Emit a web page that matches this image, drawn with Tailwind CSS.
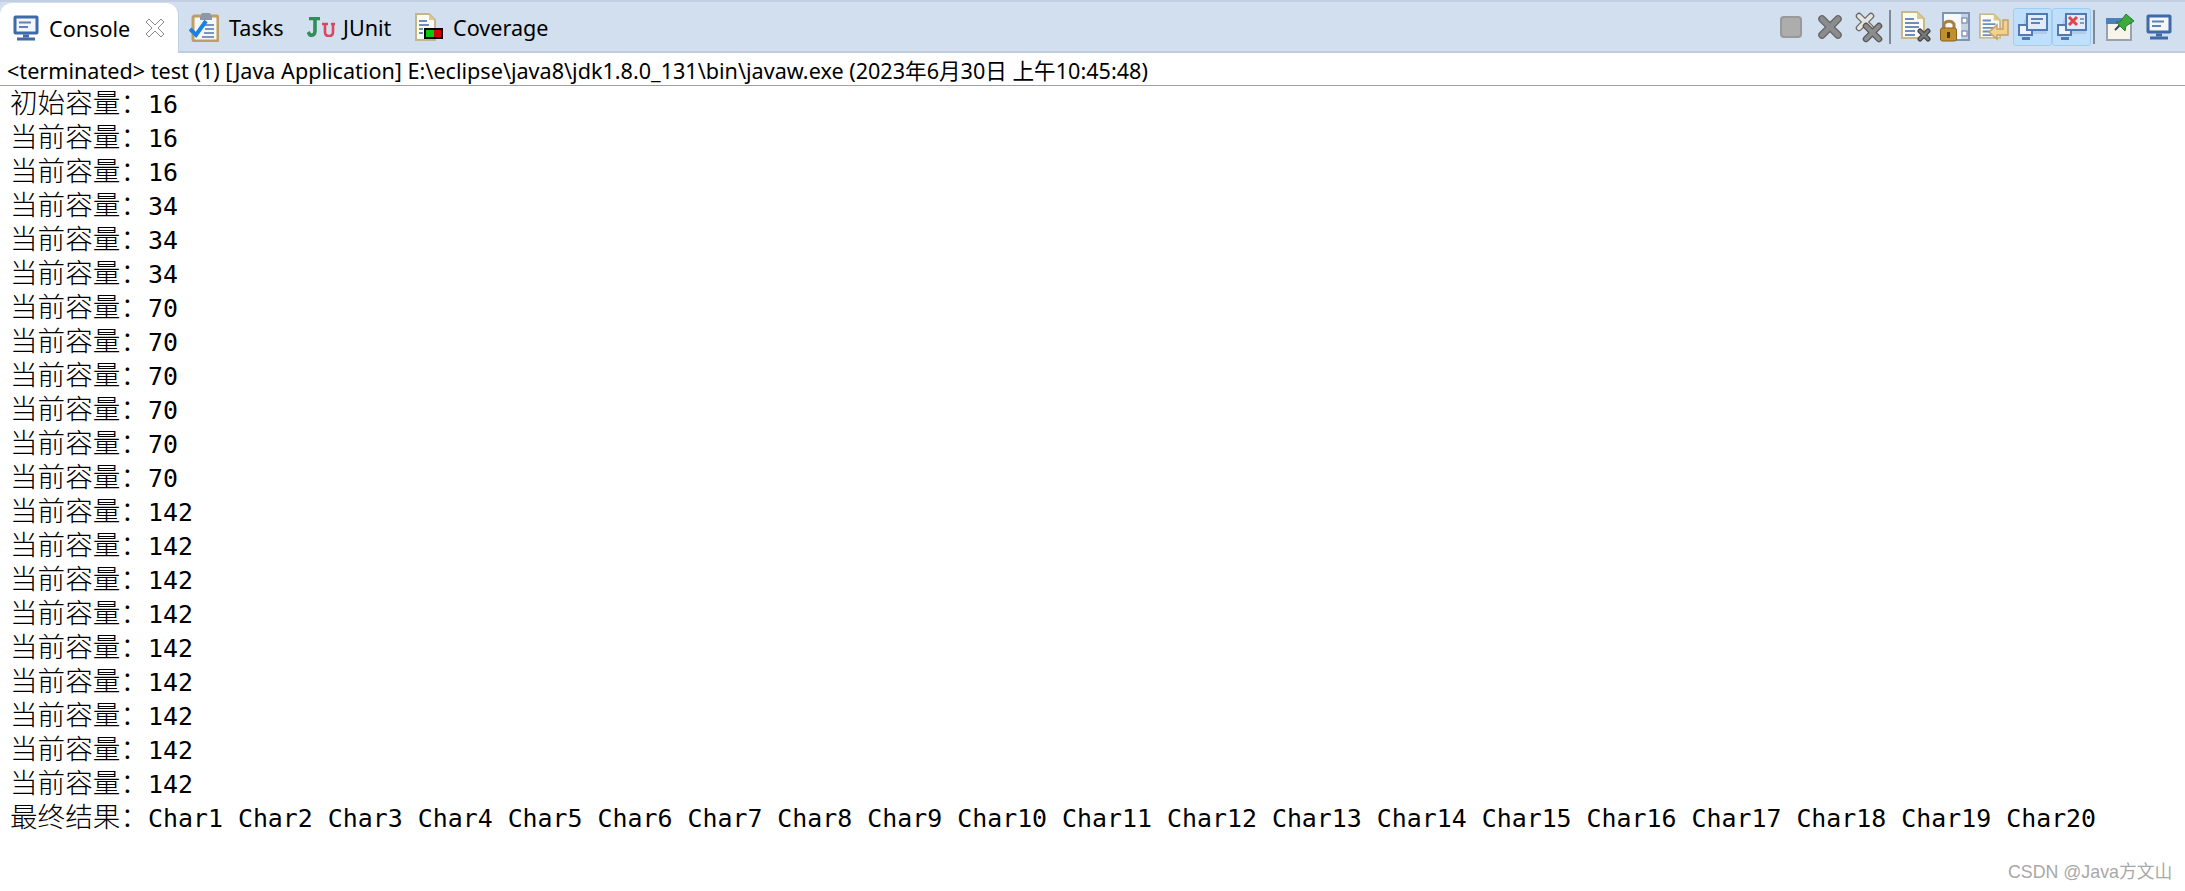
<!DOCTYPE html>
<html lang="en">
<head>
    <meta charset="UTF-8">
    <title>Console</title>
    <script src="https://cdn.jsdelivr.net/npm/@tailwindcss/browser@4"></script>
</head>
<body class="bg-white w-[2185px] h-[891px] overflow-hidden relative font-['Noto_Sans','Noto_Sans_CJK_SC',sans-serif] text-black">
    <!-- Svg defs -->
    <svg width="0" height="0" class="absolute">
        <defs>
            <symbol id="monitor" viewBox="0 0 26 26">
                <rect x="0.5" y="0.5" width="25" height="19" rx="2" fill="#3f6aa8"/>
                <rect x="3.5" y="3.5" width="19" height="13" fill="#f3f6fa"/>
                <rect x="6" y="6.5" width="12" height="2" fill="#5f82b5"/>
                <rect x="6" y="11" width="9" height="2" fill="#5f82b5"/>
                <rect x="10" y="19.5" width="6" height="3" fill="#3f6aa8"/>
                <rect x="4" y="22.5" width="18" height="3" fill="#3f6aa8"/>
            </symbol>
            <symbol id="grayx" viewBox="0 0 26 26">
                <path d="M5 5 L21 21 M21 5 L5 21" stroke="#666" stroke-width="7.5" stroke-linecap="round"/>
                <path d="M5 5 L21 21 M21 5 L5 21" stroke="#8c8c8c" stroke-width="5" stroke-linecap="round"/>
            </symbol>
            <symbol id="doc" viewBox="0 0 24 28">
                <path d="M1 1 H16 L23 8 V27 H1 Z" fill="#fbfaf3" stroke="#c9b888" stroke-width="2"/>
                <path d="M16 1 V8 H23 Z" fill="#dcc78f"/>
                <path d="M4 8 H13 M4 12 H18 M4 16 H18 M4 20 H14 M4 24 H14" stroke="#6d8dbd" stroke-width="2"/>
            </symbol>
        </defs>
    </svg>

    <!-- View tabs and toolbar -->
    <header class="h-[53px] bg-[#d1dfee] border-t-[2px] border-t-[#c2cfe0] border-b-[2px] border-b-[#bccde2] flex items-end">
        <div class="w-[179px] h-[50px] -mb-[2px] bg-white rounded-t-[12px] flex items-center pl-[13px] shrink-0 border-r border-r-[#c0d0e4]">
            <svg class="w-[26px] h-[26px] shrink-0" viewBox="0 0 26 26"><use href="#monitor"/></svg>
            <span class="ml-[10px] mt-[2px] text-[21.6px] leading-none w-[96px] shrink-0">Console</span>
            <svg class="w-[20px] h-[20px] shrink-0" viewBox="0 0 20 20" fill="#fff" stroke="#8a8a8a" stroke-width="1">
                <path d="M1 4 L4 1 L10 7 L16 1 L19 4 L13 10 L19 16 L16 19 L10 13 L4 19 L1 16 L7 10 Z"/>
            </svg>
        </div>
        <nav class="flex items-center h-[49px] pl-[10px] text-[21.6px] leading-none shrink-0">
            <svg class="w-[30px] h-[30px] shrink-0" viewBox="0 0 30 30">
                <rect x="4" y="4" width="25" height="25" rx="2" fill="#f6f6f2" stroke="#bd9e68" stroke-width="3"/>
                <path d="M11 5 L13 1 H21 L23 5 V8 H11 Z" fill="#8d97a8"/>
                <path d="M16 13 H25 M16 17 H25 M15 21 H25 M13 25 H25" stroke="#7c95bd" stroke-width="2"/>
                <path d="M1 17 L7 23 L17 9" fill="none" stroke="#1681e6" stroke-width="4"/>
            </svg>
            <span class="ml-[10px] mt-[2px] w-[78px] shrink-0">Tasks</span>
            <span class="w-[28px] h-[20px] flex shrink-0">
                <svg class="w-[28px] h-[20px]" viewBox="0 0 28 20">
                    <path d="M2 1.5 H13 M8 1 V14 Q8 19 3 18 L1 15" fill="none" stroke="#2f8f57" stroke-width="3.6"/>
                    <path d="M15 7 H21 M24 7 H28 M18 7 V15 Q18 19 22 19 Q26 19 26 15 V7" fill="none" stroke="#d9475f" stroke-width="2.6"/>
                </svg>
            </span>
            <span class="ml-[8px] mt-[2px] w-[72px] shrink-0">JUnit</span>
            <svg class="w-[28px] h-[28px] shrink-0" viewBox="0 0 28 28">
                <path d="M1 1 H14 L20 7 V27 H1 Z" fill="#fbfaf3" stroke="#c4b68c" stroke-width="2"/>
                <path d="M14 1 V7 H20 Z" fill="#dcc78f"/>
                <path d="M4 8 H12 M4 12 H14 M4 16 H8 M4 20 H8" stroke="#6d8dbd" stroke-width="2"/>
                <rect x="9" y="15" width="19" height="11" fill="#000"/>
                <rect x="11" y="17" width="8" height="7" fill="#0cc70c"/>
                <rect x="19" y="17" width="7" height="7" fill="#d40000"/>
            </svg>
            <span class="ml-[10px] mt-[2px]">Coverage</span>
        </nav>

        <div class="ml-auto h-[49px] flex items-center pr-[13px] shrink-0">
            <svg class="w-[22px] h-[22px] shrink-0" viewBox="0 0 22 22">
                <rect x="1" y="1" width="20" height="20" rx="3" fill="#adadad" stroke="#999" stroke-width="2"/>
            </svg>
            <svg class="ml-[15px] w-[26px] h-[26px] shrink-0" viewBox="0 0 26 26"><use href="#grayx"/></svg>
            <svg class="ml-[11px] w-[30px] h-[32px] shrink-0" viewBox="0 0 30 32">
                <path d="M5 5 L17 17 M17 5 L5 17" stroke="#666" stroke-width="6.5" stroke-linecap="round"/>
                <path d="M5 5 L17 17 M17 5 L5 17" stroke="#e4e4e0" stroke-width="4" stroke-linecap="round"/>
                <path d="M12 15 L25 28 M25 15 L12 28" stroke="#555" stroke-width="6.5" stroke-linecap="round"/>
                <path d="M12 15 L25 28 M25 15 L12 28" stroke="#8c8c8c" stroke-width="4" stroke-linecap="round"/>
            </svg>
            <span class="ml-[5px] w-[2px] h-[34px] bg-[#7f8a98] shrink-0"></span>
            <svg class="ml-[10px] w-[30px] h-[32px] shrink-0" viewBox="0 0 30 32">
                <svg x="0" y="0" width="24" height="28" viewBox="0 0 24 28"><use href="#doc"/></svg>
                <path d="M19 20 L27 28 M27 20 L19 28" stroke="#444" stroke-width="5" stroke-linecap="round"/>
                <path d="M19 20 L27 28 M27 20 L19 28" stroke="#777" stroke-width="2.5" stroke-linecap="round"/>
            </svg>
            <svg class="ml-[9px] w-[30px] h-[30px] shrink-0" viewBox="0 0 30 30">
                <rect x="3" y="1" width="26" height="27" fill="#f5f8fc" stroke="#7f93b5" stroke-width="2"/>
                <rect x="21" y="2" width="7" height="25" fill="#c6d3e4"/>
                <rect x="22" y="6" width="5" height="5" fill="#fff" stroke="#5f7ba5"/>
                <rect x="22" y="19" width="5" height="5" fill="#fff" stroke="#5f7ba5"/>
                <path d="M4 17 V12 A6 6 0 0 1 14 12 V17" fill="none" stroke="#a8813e" stroke-width="3"/>
                <rect x="0.5" y="16" width="16" height="13" rx="2" fill="#c08f2e" stroke="#8c5f1c"/>
                <rect x="7" y="20" width="3" height="6" fill="#4d3410"/>
            </svg>
            <svg class="ml-[9px] w-[30px] h-[30px] shrink-0" viewBox="0 0 30 30">
                <svg x="0" y="0" width="22" height="28" viewBox="0 0 24 28"><use href="#doc"/></svg>
                <path d="M24 8 V17 H18 V13 L10 20 L18 27 V23 H29 V8 Z" fill="#f5cf8f" stroke="#c4a260" stroke-width="1.5"/>
            </svg>
            <div class="ml-[4px] w-[39px] h-[38px] bg-[#bfdffa] border border-[#9fcdf6] rounded-[3px] flex items-center justify-center shrink-0">
                <svg class="w-[30px] h-[30px]" viewBox="0 0 30 30">
                    <path d="M8 3 H29 V22 H8 L2 26 Z" fill="#9db5d4" opacity="0.45"/>
                    <rect x="1" y="13" width="13" height="10" fill="#eef3f9" stroke="#4f7ab4" stroke-width="2"/>
                    <rect x="4" y="25" width="8" height="3" fill="#4f7ab4"/>
                    <rect x="9" y="2" width="20" height="16" fill="#e3ecf6" stroke="#4f7ab4" stroke-width="2"/>
                    <path d="M13 7 H25 M13 11 H22" stroke="#5f82b5" stroke-width="2"/>
                </svg>
            </div>
            <div class="w-[39px] h-[38px] bg-[#bfdffa] border border-[#9fcdf6] rounded-[3px] flex items-center justify-center shrink-0">
                <svg class="w-[30px] h-[30px]" viewBox="0 0 30 30">
                    <path d="M8 3 H29 V22 H8 L2 26 Z" fill="#9db5d4" opacity="0.45"/>
                    <rect x="1" y="13" width="13" height="10" fill="#eef3f9" stroke="#4f7ab4" stroke-width="2"/>
                    <rect x="4" y="25" width="8" height="3" fill="#4f7ab4"/>
                    <rect x="9" y="2" width="20" height="16" fill="#e3ecf6" stroke="#4f7ab4" stroke-width="2"/>
                    <path d="M23 7 H27 M23 11 H27" stroke="#5f82b5" stroke-width="1.6"/>
                    <path d="M12 5 L20 13 M20 5 L12 13" stroke="#e2434b" stroke-width="3"/>
                </svg>
            </div>
            <span class="ml-[2px] w-[2px] h-[34px] bg-[#7f8a98] shrink-0"></span>
            <svg class="ml-[11px] w-[28px] h-[28px] shrink-0" viewBox="0 0 28 28">
                <rect x="1" y="6" width="24" height="21" fill="#f7f5ea" stroke="#9aa3ad" stroke-width="2"/>
                <rect x="0" y="5" width="26" height="6" fill="#4d80bd"/>
                <path d="M9 17 L15 11" stroke="#33475e" stroke-width="2"/>
                <path d="M14 9 L20 1 L28 8 L20 13 L19 18 L10 9 Z" fill="#3caa3c" stroke="#23802a"/>
            </svg>
            <svg class="ml-[12px] w-[26px] h-[26px] shrink-0" viewBox="0 0 26 26"><use href="#monitor"/></svg>
        </div>
    </header>

    <!-- Process label -->
    <div class="h-[33px] border-b-[1px] border-b-[#a0a0a0] pl-[7px] pt-[4px] flex items-center text-[21.6px] leading-none whitespace-pre">&lt;terminated&gt; test (1) [Java Application] E:\eclipse\java8\jdk1.8.0_131\bin\javaw.exe (2023年6月30日 上午10:45:48)</div>

    <!-- Console output -->
    <main class="pl-[10px] -mt-[2px] flex flex-col font-['DejaVu_Sans_Mono','Noto_Sans_CJK_SC',monospace] text-[24.9px] whitespace-pre">
        <div class="h-[34px] leading-[34px]"><span class="font-['Noto_Sans_CJK_SC',sans-serif] font-light text-[27.6px]">初始容量：</span>16</div>
        <div class="h-[34px] leading-[34px]"><span class="font-['Noto_Sans_CJK_SC',sans-serif] font-light text-[27.6px]">当前容量：</span>16</div>
        <div class="h-[34px] leading-[34px]"><span class="font-['Noto_Sans_CJK_SC',sans-serif] font-light text-[27.6px]">当前容量：</span>16</div>
        <div class="h-[34px] leading-[34px]"><span class="font-['Noto_Sans_CJK_SC',sans-serif] font-light text-[27.6px]">当前容量：</span>34</div>
        <div class="h-[34px] leading-[34px]"><span class="font-['Noto_Sans_CJK_SC',sans-serif] font-light text-[27.6px]">当前容量：</span>34</div>
        <div class="h-[34px] leading-[34px]"><span class="font-['Noto_Sans_CJK_SC',sans-serif] font-light text-[27.6px]">当前容量：</span>34</div>
        <div class="h-[34px] leading-[34px]"><span class="font-['Noto_Sans_CJK_SC',sans-serif] font-light text-[27.6px]">当前容量：</span>70</div>
        <div class="h-[34px] leading-[34px]"><span class="font-['Noto_Sans_CJK_SC',sans-serif] font-light text-[27.6px]">当前容量：</span>70</div>
        <div class="h-[34px] leading-[34px]"><span class="font-['Noto_Sans_CJK_SC',sans-serif] font-light text-[27.6px]">当前容量：</span>70</div>
        <div class="h-[34px] leading-[34px]"><span class="font-['Noto_Sans_CJK_SC',sans-serif] font-light text-[27.6px]">当前容量：</span>70</div>
        <div class="h-[34px] leading-[34px]"><span class="font-['Noto_Sans_CJK_SC',sans-serif] font-light text-[27.6px]">当前容量：</span>70</div>
        <div class="h-[34px] leading-[34px]"><span class="font-['Noto_Sans_CJK_SC',sans-serif] font-light text-[27.6px]">当前容量：</span>70</div>
        <div class="h-[34px] leading-[34px]"><span class="font-['Noto_Sans_CJK_SC',sans-serif] font-light text-[27.6px]">当前容量：</span>142</div>
        <div class="h-[34px] leading-[34px]"><span class="font-['Noto_Sans_CJK_SC',sans-serif] font-light text-[27.6px]">当前容量：</span>142</div>
        <div class="h-[34px] leading-[34px]"><span class="font-['Noto_Sans_CJK_SC',sans-serif] font-light text-[27.6px]">当前容量：</span>142</div>
        <div class="h-[34px] leading-[34px]"><span class="font-['Noto_Sans_CJK_SC',sans-serif] font-light text-[27.6px]">当前容量：</span>142</div>
        <div class="h-[34px] leading-[34px]"><span class="font-['Noto_Sans_CJK_SC',sans-serif] font-light text-[27.6px]">当前容量：</span>142</div>
        <div class="h-[34px] leading-[34px]"><span class="font-['Noto_Sans_CJK_SC',sans-serif] font-light text-[27.6px]">当前容量：</span>142</div>
        <div class="h-[34px] leading-[34px]"><span class="font-['Noto_Sans_CJK_SC',sans-serif] font-light text-[27.6px]">当前容量：</span>142</div>
        <div class="h-[34px] leading-[34px]"><span class="font-['Noto_Sans_CJK_SC',sans-serif] font-light text-[27.6px]">当前容量：</span>142</div>
        <div class="h-[34px] leading-[34px]"><span class="font-['Noto_Sans_CJK_SC',sans-serif] font-light text-[27.6px]">当前容量：</span>142</div>
        <div class="h-[34px] leading-[34px]"><span class="font-['Noto_Sans_CJK_SC',sans-serif] font-light text-[27.6px]">最终结果：</span>Char1 Char2 Char3 Char4 Char5 Char6 Char7 Char8 Char9 Char10 Char11 Char12 Char13 Char14 Char15 Char16 Char17 Char18 Char19 Char20</div>
    </main>

    <!-- Watermark -->
    <div class="absolute left-[2008px] top-[860px] text-[17.8px] leading-[24px] text-[#a8a8a8] font-['Liberation_Sans','Noto_Sans_CJK_SC',sans-serif] whitespace-pre">CSDN @Java方文山</div>
</body>
</html>
